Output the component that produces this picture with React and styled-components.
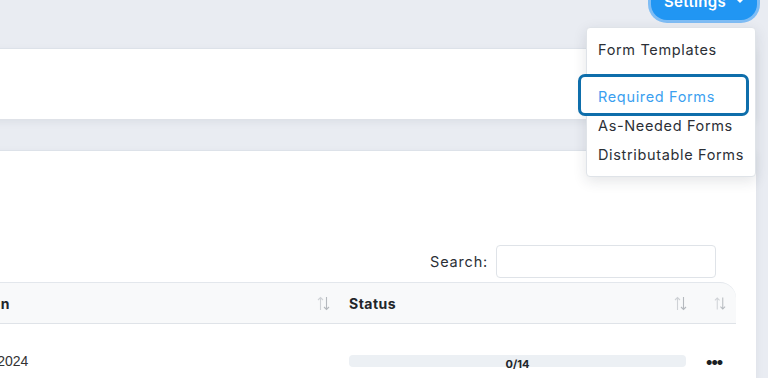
import React from "react";
import styled, { createGlobalStyle } from "styled-components";

const Global = createGlobalStyle`
  html, body { margin: 0; padding: 0; }
  body {
    background: #e9ecf2;
    font-family: Inter, "Open Sans", sans-serif;
    overflow: hidden;
  }
`;

const Page = styled.div`
  width: 768px;
  height: 378px;
  overflow: hidden;
  position: relative;
`;

const Shell = styled.div`
  margin-left: -240px;
  margin-right: 12px;
  display: flex;
  flex-direction: column;
`;

const TopBar = styled.div`
  height: 48px;
  display: flex;
  justify-content: flex-end;
  align-items: flex-start;
`;

const SettingsWrap = styled.div`
  position: relative;
  margin-right: -1px;
`;

const SettingsButton = styled.button`
  margin-top: -18px;
  height: 38px;
  width: 106px;
  border: none;
  border-radius: 16px;
  background: #2196f3;
  color: #fff;
  font-family: inherit;
  font-weight: 600;
  font-size: 15px;
  letter-spacing: 0.3px;
  display: flex;
  align-items: center;
  justify-content: center;
  gap: 10px;
  padding: 0 10px;
  box-shadow: 0 0 0 3px #7fbdf5;
`;

const Caret = styled.span`
  width: 0;
  height: 0;
  border-left: 4px solid transparent;
  border-right: 4px solid transparent;
  border-top: 4px solid #fff;
`;

const Menu = styled.div`
  position: absolute;
  top: 27px;
  right: 1px;
  width: 170px;
  box-sizing: border-box;
  background: #fff;
  border: 1px solid #dfe3e8;
  border-radius: 4px;
  box-shadow: 0 4px 14px rgba(30, 40, 60, 0.12);
  padding: 7px 0;
  z-index: 10;
`;

const MenuItem = styled.div`
  position: relative;
  height: 29px;
  display: flex;
  align-items: center;
  padding-left: 11px;
  font-size: 14.5px;
  letter-spacing: 0.65px;
  color: ${(p) => (p.$active ? "#3b9ff0" : "#2b2f36")};
  margin-top: ${(p) => (p.$gap ? "18px" : "0")};
  white-space: nowrap;
`;

const Label = styled.span`
  position: relative;
  z-index: 2;
`;

const FocusRing = styled.span`
  position: absolute;
  top: -8px;
  bottom: -5px;
  left: -9px;
  right: 6px;
  border: 3px solid #0e6eab;
  border-radius: 7px;
  background: #fff;
  z-index: 1;
`;

const Card = styled.div`
  background: #fff;
  border-top: 1px solid #dde2e9;
  box-shadow: 0 3px 8px rgba(40, 50, 70, 0.07);
`;

const InfoCard = styled(Card)`
  height: 70px;
`;

const TableCard = styled(Card)`
  margin-top: 31px;
  padding: 94px 20px 40px 20px;
`;

const SearchRow = styled.div`
  display: flex;
  justify-content: flex-end;
  align-items: center;
  gap: 8px;
  margin-bottom: 4px;
  padding-right: 20px;
  font-size: 14.5px;
  color: #2b2f36;
  letter-spacing: 0.8px;
`;

const SearchInput = styled.input`
  width: 220px;
  height: 33px;
  box-sizing: border-box;
  border: 1px solid #dfe3e8;
  border-radius: 4px;
  outline: none;
`;

const Table = styled.div`
  display: grid;
  grid-template-columns: 555px 1fr 36px;
`;

const HeadCell = styled.div`
  height: 40px;
  background: #f8f9fa;
  border-top: 1px solid #e3e7ec;
  border-bottom: 1px solid #dfe3e8;
  border-top-right-radius: ${(p) => (p.$last ? "16px" : "0")};
  display: flex;
  align-items: center;
  justify-content: space-between;
  padding: 0 ${(p) => p.$pr || "10px"} 0 14px;
  font-weight: 700;
  font-size: 14px;
  letter-spacing: 0.5px;
  color: #212529;
`;

const BodyCell = styled.div`
  height: 74px;
  display: flex;
  align-items: center;
  padding: 0 ${(p) => p.$pad || "14px"};
`;

const DateText = styled.span`
  font-family: "Liberation Sans", Arial, sans-serif;
  font-size: 14px;
  color: #333;
  padding-left: 134px;
`;

const HeadText = styled.span`
  padding-left: 132px;
`;

const Progress = styled.div`
  position: relative;
  width: 337px;
  height: 12px;
  border-radius: 4px;
  background: #ecf0f4;
  display: flex;
  justify-content: center;
`;

const ProgressLabel = styled.span`
  position: absolute;
  top: 2px;
  font-size: 11px;
  font-weight: 700;
  color: #212529;
`;

const Dots = styled.span`
  font-size: 16px;
  font-weight: 900;
  letter-spacing: -1px;
  color: #1b1f24;
  line-height: 1;
`;

const SortIcon = () => (
  <svg width="13" height="15" viewBox="0 0 13 15" fill="none" strokeWidth="1.1">
    <path d="M3.5 14V1.5M1 4L3.5 1.5L6 4" stroke="#cfd2d6" />
    <path d="M9.5 1V13.5M7 11L9.5 13.5L12 11" stroke="#b5b9be" />
  </svg>
);

export default function App() {
  return (
    <Page>
      <Global />
      <Shell>
        <TopBar>
          <SettingsWrap>
            <SettingsButton>
              Settings <Caret />
            </SettingsButton>
            <Menu>
              <MenuItem>
                <Label>Form Templates</Label>
              </MenuItem>
              <MenuItem $gap $active>
                <FocusRing />
                <Label>Required Forms</Label>
              </MenuItem>
              <MenuItem>
                <Label>As-Needed Forms</Label>
              </MenuItem>
              <MenuItem>
                <Label>Distributable Forms</Label>
              </MenuItem>
            </Menu>
          </SettingsWrap>
        </TopBar>
        <InfoCard />
        <TableCard>
          <SearchRow>
            Search:
            <SearchInput type="text" />
          </SearchRow>
          <Table>
            <HeadCell $pr="5px">
              <HeadText>Completion</HeadText>
              <SortIcon />
            </HeadCell>
            <HeadCell $pr="13px">
              Status
              <SortIcon />
            </HeadCell>
            <HeadCell $last>
              <span />
              <SortIcon />
            </HeadCell>
            <BodyCell>
              <DateText>October 8, 2024</DateText>
            </BodyCell>
            <BodyCell>
              <Progress>
                <ProgressLabel>0/14</ProgressLabel>
              </Progress>
            </BodyCell>
            <BodyCell $pad="6px">
              <Dots>•••</Dots>
            </BodyCell>
          </Table>
        </TableCard>
      </Shell>
    </Page>
  );
}
